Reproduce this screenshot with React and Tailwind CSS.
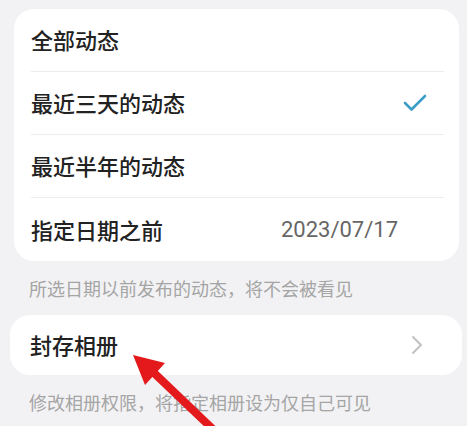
import React from 'react'

const font = { fontFamily: '"Noto Sans CJK SC", "Noto Sans", sans-serif' }

function Row({ label, children, last }) {
    return (
        <div className={`h-[63px] flex items-center justify-between ${last ? '' : 'border-b border-[#ececec]'}`}>
            <span className="text-[22px] text-[#222222] leading-none font-medium -mt-[2px]">{label}</span>
            {children}
        </div>
    )
}

export default function App() {
    return (
        <div className="relative w-[467px] h-[426px] overflow-hidden bg-[#f2f2f4] pt-[9px]" style={font}>
            {/* Visibility options */}
            <div className="ml-[14px] mr-[8px] rounded-[20px] bg-white pl-[17px] pr-[15px]">
                <Row label="全部动态" />
                <Row label="最近三天的动态">
                    <svg width="24" height="20" viewBox="0 0 24 20" className="mr-[17px]">
                        <path d="M2 10 L8.5 16.5 L22 3" fill="none" stroke="#3d9dc9" strokeWidth="2.6" strokeLinecap="round" strokeLinejoin="round" />
                    </svg>
                </Row>
                <Row label="最近半年的动态" />
                <Row label="指定日期之前" last>
                    <span className="mr-[46px] text-[22px] text-[#666666] leading-none" style={{ fontFamily: 'Roboto, "Liberation Sans", sans-serif' }}>
                        2023/07/17
                    </span>
                </Row>
            </div>

            <div className="h-[54px] flex items-center pl-[29px] text-[18px] text-[#a5a5a5]">
                所选日期以前发布的动态，将不会被看见
            </div>

            {/* Archived albums */}
            <div className="ml-[10px] mr-[5px] h-[60px] rounded-[20px] bg-white flex items-center justify-between pl-[20px] pr-[39px]">
                <span className="text-[22px] text-[#222222] leading-none font-medium -mt-[2px]">封存相册</span>
                <svg width="12" height="20" viewBox="0 0 12 20">
                    <path d="M2 2 L10 10 L2 18" fill="none" stroke="#c2c2c2" strokeWidth="2" strokeLinecap="round" strokeLinejoin="round" />
                </svg>
            </div>

            <div className="h-[54px] flex items-center pl-[29px] text-[18px] text-[#a5a5a5]">
                修改相册权限，将指定相册设为仅自己可见
            </div>

            {/* Red annotation arrow */}
            <svg className="absolute left-0 top-0 pointer-events-none" width="467" height="426" viewBox="0 0 467 426">
                <line x1="152" y1="371" x2="220" y2="436" stroke="#e3191c" strokeWidth="8" />
                <polygon points="133,355 165,363 145,385" fill="#e3191c" />
            </svg>
        </div>
    )
}
